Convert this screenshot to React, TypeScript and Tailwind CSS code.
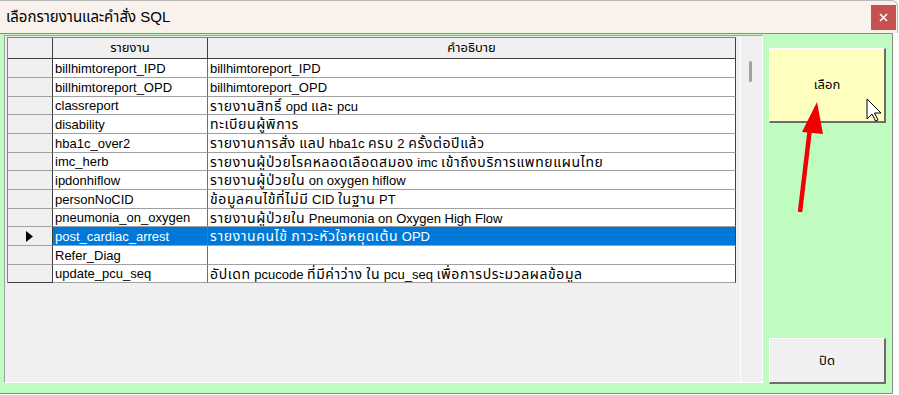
const rows: [string, string][] = [
  ["billhimtoreport_IPD", "billhimtoreport_IPD"],
  ["billhimtoreport_OPD", "billhimtoreport_OPD"],
  ["classreport", "รายงานสิทธิ์ opd และ pcu"],
  ["disability", "ทะเบียนผู้พิการ"],
  ["hba1c_over2", "รายงานการสั่ง แลป hba1c ครบ 2 ครั้งต่อปีแล้ว"],
  ["imc_herb", "รายงานผู้ป่วยโรคหลอดเลือดสมอง imc เข้าถึงบริการแพทยแผนไทย"],
  ["ipdonhiflow", "รายงานผู้ป่วยใน on oxygen hiflow"],
  ["personNoCID", "ข้อมูลคนไข้ที่ไม่มี CID ในฐาน PT"],
  ["pneumonia_on_oxygen", "รายงานผู้ป่วยใน Pneumonia on Oxygen High Flow"],
  ["post_cardiac_arrest", "รายงานคนไข้ ภาวะหัวใจหยุดเต้น OPD"],
  ["Refer_Diag", ""],
  ["update_pcu_seq", "อัปเดท pcucode ที่มีค่าว่าง ใน pcu_seq เพื่อการประมวลผลข้อมูล"],
];

const selected = 9;

function Mixed({ text }: { text: string }) {
  const parts = text.split(/([\u0E00-\u0E7F]+)/);
  return (
    <span className="whitespace-pre">
      {parts.map((p, i) =>
        /[\u0E00-\u0E7F]/.test(p) ? (
          <span key={i} className="text-[14px] tracking-[0.6px]">
            {p}
          </span>
        ) : (
          p
        )
      )}
    </span>
  );
}

function Grid() {
  return (
    <div className="flex w-[759px] h-[348px] bg-[#f0f0f0] border-t border-l border-t-[#a0a0a0] border-l-[#a0a0a0] border-b border-r border-b-white border-r-white">
      <div className="ml-[2px] mt-[1px] w-[729px] self-start border-t border-l border-[#808080]">
        {/* header */}
        <div className="flex h-[21px] text-[13px]">
          <div className="w-[45px] bg-[#f0f0f0] border-r border-b border-[#404040]" />
          <div className="w-[155px] flex items-center justify-center bg-[#f0f0f0] border-r border-b border-[#404040]">
            รายงาน
          </div>
          <div className="w-[528px] flex items-center justify-center bg-[#f0f0f0] border-r border-b border-[#404040]">
            คำอธิบาย
          </div>
        </div>
        {rows.map(([name, desc], i) => {
          const sel = i === selected;
          const last = i === rows.length - 1;
          return (
            <div key={name} className={`flex text-[13px] leading-none ${i % 3 === 2 ? "h-[18px]" : "h-[19px]"}`}>
              <div
                className={`w-[45px] flex items-center justify-center bg-[#f0f0f0] border-r border-r-[#404040] border-b ${
                  last ? "border-b-[#404040]" : "border-b-[#a0a0a0]"
                }`}
              >
                {sel && (
                  <svg width="7" height="11" viewBox="0 0 7 11" className="ml-[-1px]">
                    <polygon points="0,0 7,5.5 0,11" fill="#000" />
                  </svg>
                )}
              </div>
              <div
                className={`w-[155px] flex items-center pl-[2px] whitespace-nowrap overflow-hidden border-r border-r-[#707070] border-b border-b-[#a0a0a0] ${
                  sel ? "bg-[#0078d7] text-white" : "bg-white"
                }`}
              >
                {name}
              </div>
              <div
                className={`w-[528px] flex items-center pl-[2px] whitespace-nowrap overflow-hidden border-r border-r-[#404040] border-b border-b-[#a0a0a0] ${
                  sel ? "bg-[#0078d7] text-white" : "bg-white"
                }`}
              >
                <Mixed text={desc} />
              </div>
            </div>
          );
        })}
      </div>
      {/* scrollbar */}
      <div className="ml-[4px] flex-1 border-l border-white">
        <div className="ml-[8px] mt-[25px] w-[3px] h-[21px] rounded-full bg-[#a0a0a0]" />
      </div>
    </div>
  );
}

export default function App() {
  return (
    <div className="relative w-[899px] h-[395px] bg-white overflow-hidden text-black font-['Liberation_Sans','Noto_Sans_Thai','Tahoma',sans-serif]">
      <div className="w-[898px] h-[33px] bg-[#f9f1eb] border-t border-r border-[#b8b8b8] rounded-tr-[6px] flex items-center justify-between pl-[6px]">
        <span className="text-[15px]">เลือกรายงานและคำสั่ง SQL</span>
        <div className="w-[25px] h-[25px] mr-[1px] bg-[#c75050] flex items-center justify-center">
          <svg width="9" height="9" viewBox="0 0 9 9">
            <path d="M1 1 L8 8 M8 1 L1 8" stroke="#fff" strokeWidth="1.6" />
          </svg>
        </div>
      </div>
      <div className="w-[893px] h-[361px] bg-[#c0fcc0] border-t border-r border-b border-[#8a8a8a] flex pl-[4px] pt-[1px]">
        <Grid />
        <div className="ml-[6px] w-[117px] flex flex-col justify-between pt-[13px] pb-[9px] text-[13px]">
          <div className="h-[75px] bg-[#ffffc0] flex items-center justify-center border-t border-l border-t-white border-l-white border-b-2 border-r-2 border-b-[#6d6d6d] border-r-[#6d6d6d]">
            เลือก
          </div>
          <div className="h-[46px] bg-[#f0f0f0] flex items-center justify-center border-t border-l border-t-white border-l-white border-b-2 border-r-2 border-b-[#6d6d6d] border-r-[#6d6d6d]">
            ปิด
          </div>
        </div>
      </div>
      <svg className="absolute left-0 top-0 pointer-events-none" width="899" height="395">
        <line x1="800" y1="212" x2="810" y2="128" stroke="#f00000" strokeWidth="4.5" />
        <polygon points="817,102 802,132 823,134" fill="#f00000" />
        <path
          d="M867 99 L867 119 L872 114 L875.5 121 L878 120 L874.5 113 L881 113 Z"
          fill="#fff"
          stroke="#000"
          strokeWidth="1"
          strokeLinejoin="miter"
        />
      </svg>
    </div>
  );
}
